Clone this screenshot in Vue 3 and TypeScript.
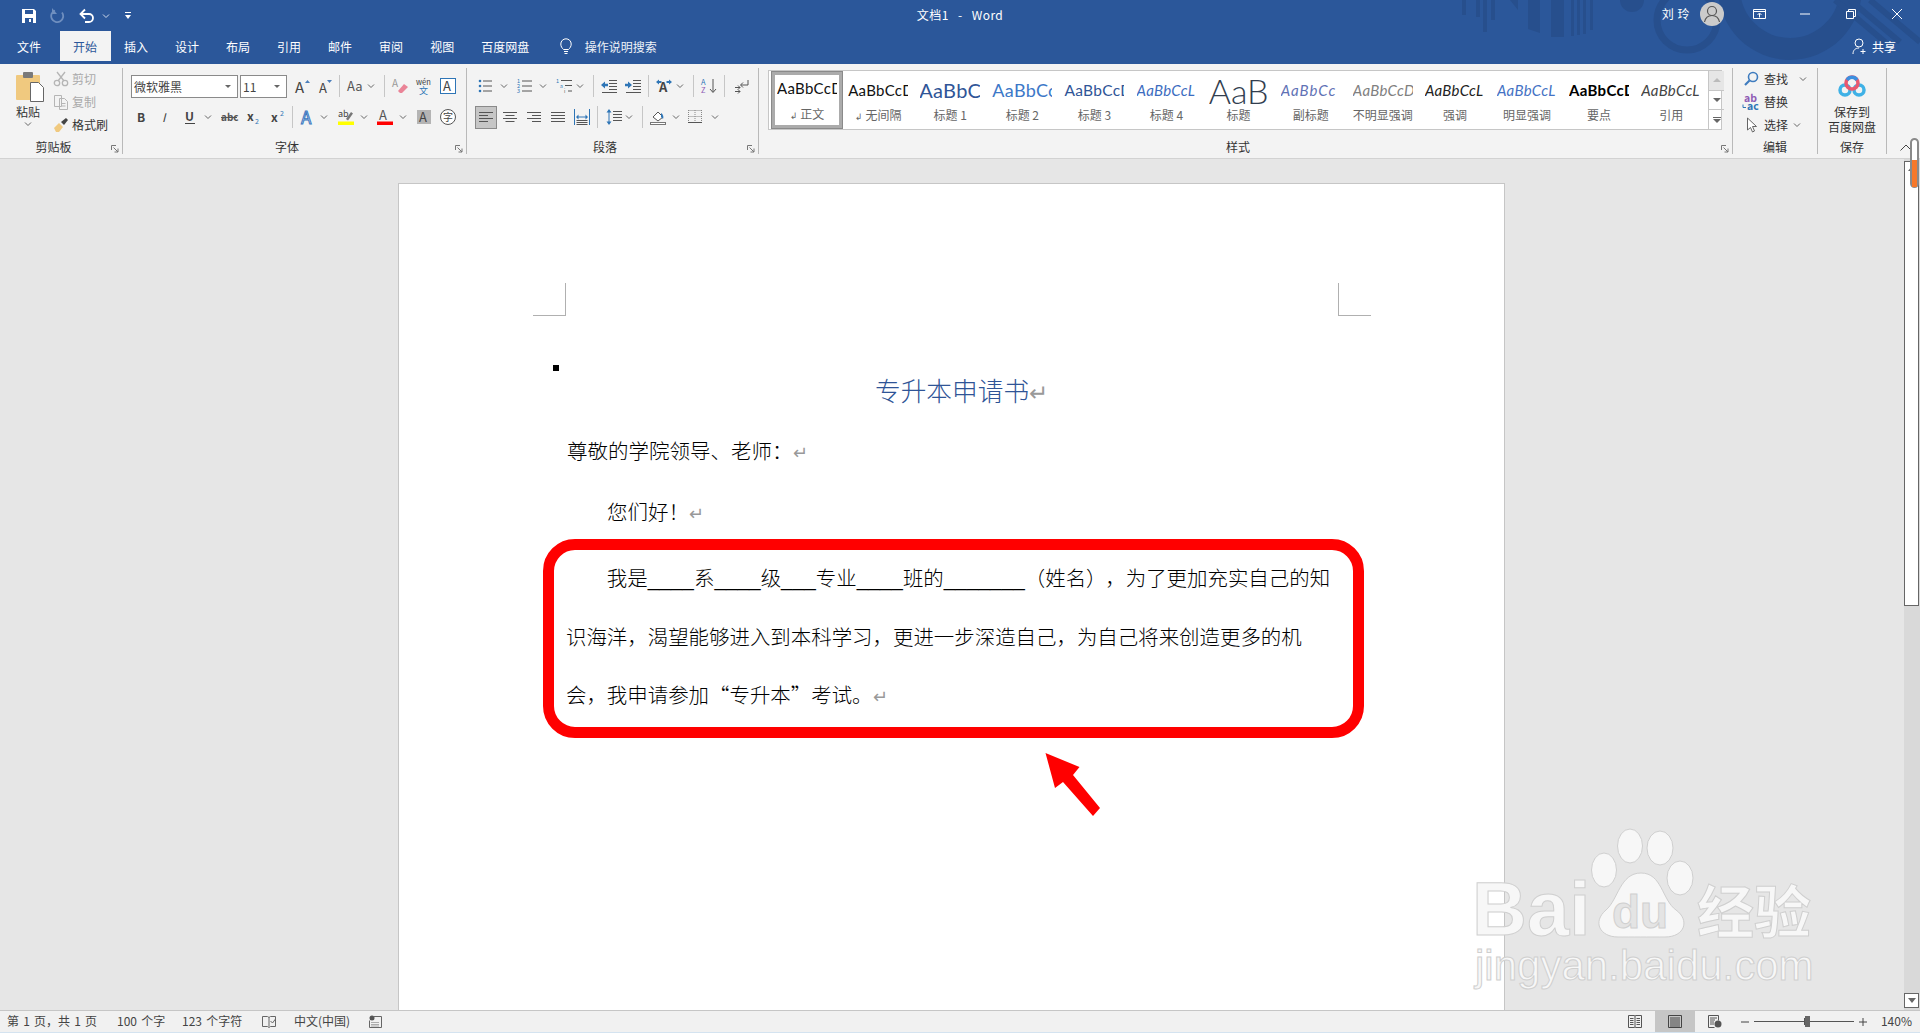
<script setup lang="ts">
interface Cell {
  size: number;
  ml: number;
  svg?: string;
  sep?: boolean;
  active?: boolean;
}

// [icon name, centre x on the ribbon, active]
type Spec = [string, number, boolean?];

const GREY = '#555';
const BLUE = '#2e75b6';
const CHEV = '<path d="M1 2.5l3 3 3-3" fill="none" stroke="#666" stroke-width="1"/>';

const txt = (x: number, y: number, size: number, s: string, attrs = 'fill="#444"') =>
  `<text x="${x}" y="${y}" font-size="${size}" ${attrs}>${s}</text>`;

const lines = (d: string, color = GREY) => `<path d="${d}" fill="none" stroke="${color}" stroke-width="1"/>`;

const icons: Record<string, string> = {
  grow: txt(1, 15, 15, 'A', 'fill="#444"') + `<path d="M11 5l2.5-3L16 5z" fill="#4a7ebb"/>`,
  shrink: txt(2, 15, 13, 'A', 'fill="#444"') + `<path d="M10 2h5l-2.5 3z" fill="#4a7ebb"/>`,
  case: txt(1, 13, 13, 'Aa', 'fill="#555"'),
  eraser: txt(0, 9, 10, 'A', 'fill="#999"') + `<path d="M6 13l6-7 4 3-6 6H8z" fill="#ea8497"/>`,
  wen: txt(0, 7, 7.5, 'wén', 'fill="#333"') + txt(3, 16, 9, '文', `fill="${BLUE}"`),
  boxA: `<rect x=".5" y=".5" width="15" height="15" fill="#fff" stroke="${BLUE}"/>` + txt(3, 13, 13, 'A', 'fill="#444"'),
  bold: txt(4, 13, 12, 'B', 'fill="#444" font-weight="bold"'),
  italic: txt(5, 13, 12, 'I', 'fill="#444" font-style="italic"'),
  under: txt(3, 12, 12, 'U', 'fill="#444" font-weight="bold"') + lines('M3 14.5h10', '#444'),
  strike: txt(0, 12, 10, 'abc', 'fill="#555" font-weight="bold"') + lines('M0 8.5h16', '#555'),
  sub: txt(1, 12, 12, 'x', 'fill="#444" font-weight="bold"') + txt(9, 15, 7, '2', `fill="${BLUE}"`),
  sup: txt(1, 13, 12, 'x', 'fill="#444" font-weight="bold"') + txt(10, 7, 7, '2', `fill="${BLUE}"`),
  fxA: txt(1, 15, 17, 'A', `fill="#fff" stroke="#3b78c0" stroke-width="1"`),
  hl: txt(0, 8, 9, 'ab', 'fill="#444"') + `<path d="M8 10l5-7 2 1.5-5 7z" fill="#777"/><rect y="12.5" width="16" height="3.5" fill="#ff0"/>`,
  colorA: txt(2, 11, 13, 'A', 'fill="#555"') + `<rect y="12.5" width="16" height="3.5" fill="#f00"/>`,
  bgA: `<rect x="1" y="1" width="14" height="14" fill="#b4b4b4"/>` + txt(3, 13, 13, 'A', 'fill="#444"'),
  circ: `<circle cx="8" cy="8" r="7.5" fill="#fff" stroke="#555"/>` + txt(3, 12, 10, '字', 'fill="#444"'),
  bullets: `<circle cx="2" cy="3" r="1.3" fill="${BLUE}"/><circle cx="2" cy="8" r="1.3" fill="${BLUE}"/><circle cx="2" cy="13" r="1.3" fill="${BLUE}"/>` + lines('M5 3h9M5 8h9M5 13h9'),
  nums: txt(0, 5, 5.5, '1', `fill="${BLUE}"`) + txt(0, 10, 5.5, '2', `fill="${BLUE}"`) + txt(0, 15, 5.5, '3', `fill="${BLUE}"`) + lines('M5 3h10M5 8h10M5 13h10'),
  multi: txt(0, 5, 5.5, '1', `fill="${BLUE}"`) + txt(4, 10, 5, 'a', `fill="${BLUE}"`) + txt(8, 15, 5, 'i', 'fill="#555"') + lines('M5 2.5h11M9 7.5h7M12 13h4'),
  outdent: lines('M8 2.5h8M8 5.5h8M8 8.5h8M8 11.5h8M1 14.5h15') + `<path d="M0 7l4-3.5v2.2h3v2.6H4v2.2z" fill="${BLUE}"/>`,
  indent: lines('M8 2.5h8M8 5.5h8M8 8.5h8M8 11.5h8M1 14.5h15') + `<path d="M7 7L3 3.5v2.2H0v2.6h3v2.2z" fill="${BLUE}"/>`,
  xA: txt(3, 14, 13, 'A', 'fill="#444" font-weight="bold"') + `<path d="M0 4l3-2.5V3h2.5v2H3v1.5zM16 4l-3-2.5V3h-2.5v2H13v1.5z" fill="${BLUE}"/>`,
  sort: txt(0, 7, 7.5, 'A', `fill="${BLUE}"`) + txt(0, 15, 7.5, 'Z', 'fill="#8e5bb5"') + lines('M12 1v13M9 11l3 3.5 3-3.5'),
  para: lines('M15 2v5H8M10 4.5L7.5 7l2.5 2.5M2 9.5h5M5 7.5l2 2-2 2M2 13.5h5M5 11.5l2 2-2 2'),
  alignL: lines('M1 3.5h14M1 6.5h9M1 9.5h14M1 12.5h9'),
  alignC: lines('M1 3.5h14M3.5 6.5h9M1 9.5h14M3.5 12.5h9'),
  alignR: lines('M1 3.5h14M6 6.5h9M1 9.5h14M6 12.5h9'),
  just: lines('M1 3.5h14M1 6.5h14M1 9.5h14M1 12.5h14'),
  dist: lines('M.5 0v16M15.5 0v16', BLUE) + lines('M3 8h10', BLUE) + lines('M2.5 11.5h11M2.5 13.5h11M2.5 15.5h11') + `<path d="M2 8l2.5-2.5v5zM14 8l-2.5-2.5v5z" fill="${BLUE}"/>`,
  spacing: lines('M7 2.5h9M7 5.5h9M7 8.5h9M7 11.5h9') + lines('M3 1.5v13', BLUE) + `<path d="M3 0L.5 3.5h5zM3 16L.5 12.5h5z" fill="${BLUE}"/>`,
  shade: `<path d="M3 8l5-5 5 5-5 4z" fill="#fff" stroke="#555"/><path d="M11 4c2 1 3 4 2 6l-2-2z" fill="${BLUE}"/><rect x=".5" y="13.5" width="15" height="2" fill="#fff" stroke="#777"/>`,
  borders: `<path d="M.5 1.5h13M.5 7.5h13M7 1v12M.5 1v12M13.5 1v12" fill="none" stroke="#888" stroke-width="1" stroke-dasharray="1 1"/>` + lines('M0 13.5h14'),
};

function layout(start: number, specs: Spec[]): Cell[] {
  let end = start;
  return specs.map(([name, c, active]) => {
    const isChev = name === 'chev';
    const isSep = name === 'sep';
    const size = isSep ? 1 : isChev ? 8 : active ? 22 : 16;
    const left = c - size / 2;
    const cell: Cell = {
      size,
      ml: left - end,
      svg: isSep ? undefined : isChev ? CHEV : icons[name],
      sep: isSep,
      active,
    };
    end = left + size;
    return cell;
  });
}

const fontRow1 = layout(287, [
  ['grow', 301.5], ['shrink', 325], ['sep', 339], ['case', 353.5], ['chev', 371], ['sep', 384],
  ['eraser', 400], ['wen', 424], ['boxA', 448],
]);
const fontRow2 = layout(131, [
  ['bold', 141], ['italic', 165], ['under', 189.5], ['chev', 208], ['strike', 229], ['sub', 253.5],
  ['sup', 277.5], ['sep', 292], ['fxA', 308], ['chev', 324], ['hl', 346], ['chev', 364],
  ['colorA', 385], ['chev', 403], ['bgA', 424], ['circ', 448],
]);
const paraRow1 = layout(475, [
  ['bullets', 486], ['chev', 504], ['nums', 525], ['chev', 543], ['multi', 564], ['chev', 580],
  ['sep', 593], ['outdent', 609], ['indent', 633], ['sep', 648], ['xA', 664], ['chev', 680],
  ['sep', 693], ['sort', 709], ['sep', 724], ['para', 741],
]);
const paraRow2 = layout(475, [
  ['alignL', 486, true], ['alignC', 510], ['alignR', 534], ['just', 558], ['dist', 582], ['sep', 597],
  ['spacing', 614], ['chev', 629], ['sep', 642], ['shade', 658], ['chev', 676], ['borders', 696], ['chev', 715],
]);

const tabs = ['文件', '开始', '插入', '设计', '布局', '引用', '邮件', '审阅', '视图', '百度网盘'];

const styleItems = [
  { sample: 'AaBbCcD', label: '正文', cls: 's-normal', mark: true, selected: true },
  { sample: 'AaBbCcD', label: '无间隔', cls: 's-normal', mark: true },
  { sample: 'AaBbC', label: '标题 1', cls: 's-h1' },
  { sample: 'AaBbCc', label: '标题 2', cls: 's-h2' },
  { sample: 'AaBbCcD', label: '标题 3', cls: 's-h3' },
  { sample: 'AaBbCcL', label: '标题 4', cls: 's-h4' },
  { sample: 'AaB', label: '标题', cls: 's-title' },
  { sample: 'AaBbCc', label: '副标题', cls: 's-sub' },
  { sample: 'AaBbCcD', label: '不明显强调', cls: 's-faint' },
  { sample: 'AaBbCcL', label: '强调', cls: 's-em' },
  { sample: 'AaBbCcL', label: '明显强调', cls: 's-strong-em' },
  { sample: 'AaBbCcD', label: '要点', cls: 's-bold' },
  { sample: 'AaBbCcL', label: '引用', cls: 's-quote' },
];
</script>

<template>
  <div class="word">
    <header class="titlebar">
      <svg class="pattern" width="470" height="64" viewBox="1450 0 470 64">
        <g fill="#274f8d">
          <path d="M1462 0h4v15h-4zM1476 0h4v17h-4zM1483 0h4v32h-4zM1491 0h4v20h-4zM1510 0h8v10zM1528 0h12v33l-12-4zM1551 0h13v37h-13zM1571 0h3v36h-3zM1577 0h3v35h-3zM1583 0h3v34h-3zM1590 0h3v30h-3z" />
          <circle cx="1632" cy="0" r="12" />
          <circle cx="1790" cy="-12" r="72" />
        </g>
        <circle cx="1687" cy="20" r="30" fill="none" stroke="#274f8d" stroke-width="7" />
        <circle cx="1790" cy="-12" r="50" fill="#2b579a" />
        <path d="M1835 0l50 42M1850 0l50 42M1870 0l50 42" stroke="#274f8d" stroke-width="6" />
      </svg>

      <div class="title-row">
        <div class="qat">
          <svg width="16" height="16" viewBox="0 0 16 16">
            <path d="M1 1h12l2 2v12H1z" fill="#fff" />
            <path d="M4 2h8v4H4zM4 10h8v5H4z" fill="#2b579a" />
            <path d="M8 11h2v3H8z" fill="#fff" />
          </svg>
          <svg class="redo" width="16" height="16" viewBox="0 0 16 16">
            <path d="M5 2.5a6 6 0 1 0 7 2" fill="none" stroke="#6f8fbf" stroke-width="1.8" />
            <path d="M2 0v6h5z" fill="#6f8fbf" />
          </svg>
          <svg class="undo" width="16" height="16" viewBox="0 0 16 16">
            <path d="M2 6h8a4 4 0 0 1 0 8H6" fill="none" stroke="#fff" stroke-width="1.8" />
            <path d="M6 1.5L1.5 6 6 10.5" fill="none" stroke="#fff" stroke-width="1.8" />
          </svg>
          <svg class="undo-chev" width="8" height="8" viewBox="0 0 8 8">
            <path d="M1 2.5l3 3 3-3" fill="none" stroke="#cfdaeb" />
          </svg>
          <svg class="custom" width="8" height="10" viewBox="0 0 8 10">
            <path d="M1 1.5h6" stroke="#fff" />
            <path d="M1 4h6L4 8z" fill="#fff" />
          </svg>
        </div>
        <div class="doc-name">文档1 &nbsp;&nbsp;-&nbsp;&nbsp; Word</div>
        <div class="win">
          <span class="user">刘 玲</span>
          <svg class="avatar" width="24" height="24" viewBox="0 0 24 24">
            <circle cx="12" cy="12" r="12" fill="#cbcbcb" />
            <circle cx="12" cy="9" r="4.5" fill="none" stroke="#555" stroke-width="1.2" />
            <path d="M4.5 20c1-5 4-6.500 7.500-6.500s6.500 1.500 7.500 6.500" fill="none" stroke="#555" stroke-width="1.2" />
          </svg>
          <svg class="display" width="13" height="10" viewBox="0 0 13 10">
            <path d="M.5.5h12v9H.5z" fill="none" stroke="#fff" />
            <path d="M1 2.500h11" stroke="#fff" />
            <path d="M6.500 8.500v-4M4.500 6l2-2 2 2" fill="none" stroke="#fff" />
          </svg>
          <svg class="w-min" width="10" height="10" viewBox="0 0 10 10"><path d="M0 5h10" stroke="#fff" /></svg>
          <svg class="w-max" width="10" height="10" viewBox="0 0 10 10">
            <path d="M.5 2.500h7v7h-7zM2.500 2.500v-2h7v7h-2" fill="none" stroke="#fff" />
          </svg>
          <svg class="w-close" width="10" height="10" viewBox="0 0 10 10">
            <path d="M0 0l10 10M10 0L0 10" stroke="#fff" />
          </svg>
        </div>
      </div>

      <nav class="tabs">
        <span v-for="tab in tabs" :key="tab" class="tab" :class="{ active: tab === '开始' }">{{ tab }}</span>
        <svg class="bulb" width="12" height="17" viewBox="0 0 12 17">
          <path d="M3.500 11.500C2 10 .8 8.500.8 6a5.200 5.200 0 0 1 10.400 0c0 2.500-1.200 4-2.700 5.500z" fill="none" stroke="#fff" />
          <path d="M4 13.500h4M4.500 15.500h3" stroke="#fff" />
        </svg>
        <span class="search">操作说明搜索</span>
        <span class="share">
          <svg width="16" height="17" viewBox="0 0 16 17">
            <circle cx="7" cy="5" r="4" fill="none" stroke="#fff" />
            <path d="M1 16c0-4 2.500-6 6-6M11 11v5M8.500 13.500h5" fill="none" stroke="#fff" />
          </svg>
          共享
        </span>
      </nav>
    </header>

    <section class="ribbon">
      <!-- 剪贴板 -->
      <div class="group g-clip">
        <div class="clip-body">
          <div class="paste">
            <svg width="28" height="30" viewBox="0 0 28 30">
              <rect x="0" y="3" width="24" height="25" rx="1" fill="#f0c97f" />
              <rect x="7" y="0" width="10" height="6" rx="1" fill="#7a7a7a" />
              <path d="M14.500 10.500h8l5 5v14h-13z" fill="#fff" stroke="#666" />
            </svg>
            <span class="paste-text">粘贴</span>
            <svg width="8" height="8" viewBox="0 0 8 8" v-html="CHEV" />
          </div>
          <div class="clip-list">
            <div class="clip-row off">
              <svg width="16" height="16" viewBox="0 0 16 16">
                <path d="M4 1l7 9M12 1L5 10" stroke="#b5b5b5" stroke-width="1.300" />
                <circle cx="4" cy="12" r="2.700" fill="none" stroke="#b5b5b5" stroke-width="1.300" />
                <circle cx="12" cy="12" r="2.700" fill="none" stroke="#b5b5b5" stroke-width="1.300" />
              </svg>
              剪切
            </div>
            <div class="clip-row off">
              <svg width="16" height="16" viewBox="0 0 16 16">
                <path d="M1.500 1.500h7v11h-7zM6.500 4.500h5l3 3v8h-8z" fill="#f3f3f3" stroke="#b5b5b5" />
                <path d="M8.500 9.500h4M8.500 12h4" stroke="#b5b5b5" />
              </svg>
              复制
            </div>
            <div class="clip-row">
              <svg width="16" height="16" viewBox="0 0 16 16">
                <path d="M1 11l5-5 4 4-4 5H3z" fill="#f0c97f" />
                <path d="M8 5l5-4 2 2-4 5z" fill="#444" />
              </svg>
              格式刷
            </div>
          </div>
        </div>
        <div class="group-label with-launcher">剪贴板</div>
        <svg class="launcher" width="8" height="8" viewBox="0 0 8 8">
          <path d="M.5 5V.5H5M2.500 2.500L7 7M7 3.500V7H3.500" fill="none" stroke="#777" />
        </svg>
      </div>

      <!-- 字体 -->
      <div class="group g-font">
        <div class="tool-rows">
          <div class="row">
            <span class="combo font-combo">微软雅黑<i class="caret" /></span>
            <span class="combo size-combo">11<i class="caret" /></span>
            <template v-for="(cell, i) in fontRow1" :key="i">
              <span v-if="cell.sep" class="sep" :style="{ marginLeft: cell.ml + 'px' }" />
              <svg v-else :style="{ marginLeft: cell.ml + 'px' }" :width="cell.size" :height="cell.size" :viewBox="`0 0 ${cell.size} ${cell.size}`" v-html="cell.svg" />
            </template>
          </div>
          <div class="row">
            <template v-for="(cell, i) in fontRow2" :key="i">
              <span v-if="cell.sep" class="sep" :style="{ marginLeft: cell.ml + 'px' }" />
              <svg v-else :style="{ marginLeft: cell.ml + 'px' }" :width="cell.size" :height="cell.size" :viewBox="`0 0 ${cell.size} ${cell.size}`" v-html="cell.svg" />
            </template>
          </div>
        </div>
        <div class="group-label with-launcher">字体</div>
        <svg class="launcher" width="8" height="8" viewBox="0 0 8 8">
          <path d="M.5 5V.5H5M2.500 2.500L7 7M7 3.500V7H3.500" fill="none" stroke="#777" />
        </svg>
      </div>

      <!-- 段落 -->
      <div class="group g-para">
        <div class="tool-rows">
          <div class="row">
            <template v-for="(cell, i) in paraRow1" :key="i">
              <span v-if="cell.sep" class="sep" :style="{ marginLeft: cell.ml + 'px' }" />
              <svg v-else :style="{ marginLeft: cell.ml + 'px' }" :width="cell.size" :height="cell.size" :viewBox="`0 0 ${cell.size} ${cell.size}`" v-html="cell.svg" />
            </template>
          </div>
          <div class="row">
            <template v-for="(cell, i) in paraRow2" :key="i">
              <span v-if="cell.sep" class="sep" :style="{ marginLeft: cell.ml + 'px' }" />
              <span v-else-if="cell.active" class="active-tool">
                <svg width="16" height="16" viewBox="0 0 16 16" v-html="cell.svg" />
              </span>
              <svg v-else :style="{ marginLeft: cell.ml + 'px' }" :width="cell.size" :height="cell.size" :viewBox="`0 0 ${cell.size} ${cell.size}`" v-html="cell.svg" />
            </template>
          </div>
        </div>
        <div class="group-label with-launcher">段落</div>
        <svg class="launcher" width="8" height="8" viewBox="0 0 8 8">
          <path d="M.5 5V.5H5M2.500 2.500L7 7M7 3.500V7H3.500" fill="none" stroke="#777" />
        </svg>
      </div>

      <!-- 样式 -->
      <div class="group g-style">
        <div class="gallery">
          <div v-for="item in styleItems" :key="item.label" class="style-item" :class="{ selected: item.selected }">
            <div class="sample" :class="item.cls">{{ item.sample }}</div>
            <div class="style-name"><span v-if="item.mark" class="mark">↲</span>{{ item.label }}</div>
          </div>
          <div class="gallery-btns">
            <span class="g-btn g-off"><i class="tri-up" /></span>
            <span class="g-btn"><i class="tri-down" /></span>
            <span class="g-btn"><i class="tri-more" /><i class="tri-down" /></span>
          </div>
        </div>
        <div class="group-label with-launcher">样式</div>
        <svg class="launcher" width="8" height="8" viewBox="0 0 8 8">
          <path d="M.5 5V.5H5M2.500 2.500L7 7M7 3.500V7H3.500" fill="none" stroke="#777" />
        </svg>
      </div>

      <!-- 编辑 -->
      <div class="group g-edit">
        <div class="edit-list">
          <div class="edit-row">
            <svg width="16" height="16" viewBox="0 0 16 16">
              <circle cx="10" cy="6" r="4.500" fill="none" stroke="#3f7cbf" stroke-width="1.600" />
              <path d="M6.500 9.500L2 14" stroke="#3f7cbf" stroke-width="2.200" />
            </svg>
            <span>查找</span>
            <svg class="e-chev" width="8" height="8" viewBox="0 0 8 8" v-html="CHEV" />
          </div>
          <div class="edit-row">
            <svg class="replace" width="16" height="16" viewBox="0 0 16 16">
              <text x="1" y="8" font-size="10.500" fill="#8e5bb5" font-weight="bold">ab</text>
              <text x="4" y="16" font-size="10.500" fill="#2e75b6" font-weight="bold">ac</text>
              <path d="M0 10.500v3h3" fill="none" stroke="#2e75b6" />
            </svg>
            <span>替换</span>
          </div>
          <div class="edit-row">
            <svg width="16" height="16" viewBox="0 0 16 16">
              <path d="M4.500 1v12l3-2.500 2 4.500 2-1-2-4.500h4z" fill="#fff" stroke="#666" />
            </svg>
            <span>选择</span>
            <svg class="s-chev" width="8" height="8" viewBox="0 0 8 8" v-html="CHEV" />
          </div>
        </div>
        <div class="group-label">编辑</div>
      </div>

      <!-- 保存 -->
      <div class="group g-save">
        <div class="save-body">
          <svg width="28" height="22" viewBox="0 0 28 22">
            <circle cx="7" cy="15" r="5" fill="none" stroke="#3fb1e6" stroke-width="3.500" />
            <circle cx="21" cy="15" r="5" fill="none" stroke="#3fb1e6" stroke-width="3.500" />
            <circle cx="14" cy="8" r="6" fill="none" stroke="#e9586f" stroke-width="3.500" />
            <path d="M9 5a6 6 0 0 1 10 0" fill="none" stroke="#3c8fe0" stroke-width="3.500" />
          </svg>
          <div class="save-text">保存到<br />百度网盘</div>
        </div>
        <div class="group-label">保存</div>
      </div>

      <div class="collapse">
        <svg width="12" height="7" viewBox="0 0 12 7">
          <path d="M.5 6.500L6 1l5.500 5.500" fill="none" stroke="#444" />
        </svg>
      </div>
    </section>

    <main class="workspace">
      <div class="canvas">
        <article class="page">
          <div class="crops">
            <span class="crop crop-left" />
            <span class="crop crop-right" />
          </div>
          <div class="doc">
            <i class="anchor" />
            <h1 class="doc-title">专升本申请书<span class="ret ret-big">↵</span></h1>
            <p class="greet">尊敬的学院领导、老师：<span class="ret">↵</span></p>
            <p class="hello">您们好！<span class="ret">↵</span></p>
            <div class="para">
              <div class="first">我是<span class="u">____</span>系<span class="u">____</span>级<span class="u">___</span>专业<span class="u">____</span>班的<span class="u">_______</span>（姓名）<span class="wide">，</span>为了更加充实自己的知</div>
              <div>识海洋，渴望能够进入到本科学习，更进一步深造自己，为自己将来创造更多的机</div>
              <div>会，我申请参加“专升本”考试。<span class="ret">↵</span></div>
            </div>
          </div>
          <!-- red annotation over the paragraph -->
          <div class="callout" />
          <svg class="arrow" width="70" height="70" viewBox="0 0 70 70">
            <path d="M5.500 3L39.500 17L33 25L60 58L53 66L23 32L15 38Z" fill="#f00" />
          </svg>
        </article>
      </div>
      <aside class="scrollbar">
        <div class="thumb"><i class="sb-up" /></div>
        <div class="sb-down"><i class="sb-down-tri" /></div>
      </aside>
      <div class="marker"><i /></div>
    </main>

    <footer class="statusbar">
      <span class="st st-page">第 1 页，共 1 页</span>
      <span class="st st-words">100 个字</span>
      <span class="st st-chars">123 个字符</span>
      <svg class="st-proof" width="14" height="13" viewBox="0 0 14 13">
        <path d="M.5 1.500h5l1.500 1 1.500-1h5v10h-5l-1.500 1-1.500-1h-5zM7 2.500v9" fill="none" stroke="#666" />
        <path d="M8.500 6l2 2 3-4" fill="none" stroke="#666" />
      </svg>
      <span class="st st-lang">中文(中国)</span>
      <svg class="st-macro" width="13" height="13" viewBox="0 0 13 13">
        <circle cx="3" cy="3" r="2.500" fill="#555" />
        <path d="M5 1.500h7.500v11H.5V5.500" fill="none" stroke="#666" />
        <path d="M2.500 7.500h8M2.500 9.500h8M2.500 11h8" stroke="#666" stroke-dasharray="1 1" />
      </svg>

      <div class="st-right">
        <svg width="14" height="13" viewBox="0 0 14 13">
          <path d="M.5.5h6l.5 1 .5-1h6v12h-6l-.5-1-.5 1h-6zM7 1.500v10M2 3.500h3.500M2 5.500h3.500M2 7.500h3.500M2 9.500h3.500M8.500 3.500H12M8.500 5.500H12M8.500 7.500H12M8.500 9.500H12" fill="none" stroke="#555" />
        </svg>
        <span class="view-active">
          <svg width="14" height="13" viewBox="0 0 14 13">
            <path d="M.5.5h13v12H.5zM2 3h10M2 5h10M2 7h10M2 9h10M2 11h10" fill="none" stroke="#444" />
          </svg>
        </span>
        <svg width="14" height="13" viewBox="0 0 14 13">
          <path d="M.5.5h10v5M.5.500v12h6M2 3h7M2 5h5M2 7h4M2 9h4" fill="none" stroke="#555" />
          <circle cx="10" cy="9" r="3.500" fill="#555" />
        </svg>
        <svg class="z-minus" width="8" height="8" viewBox="0 0 8 8"><path d="M0 4h8" stroke="#444" /></svg>
        <div class="slider"><i class="tick" /><i class="knob" /></div>
        <svg class="z-plus" width="8" height="8" viewBox="0 0 8 8"><path d="M0 4h8M4 0v8" stroke="#444" /></svg>
        <span class="st st-zoom">140%</span>
      </div>
    </footer>

    <!-- site watermark stamped across the whole screenshot -->
    <svg class="watermark" width="350" height="180" viewBox="0 0 350 180">
      <g fill="#f7f7f7" stroke="#cfcfcf" stroke-width="1">
        <ellipse cx="160" cy="26" rx="12.500" ry="17" />
        <ellipse cx="190" cy="28" rx="13" ry="17" />
        <ellipse cx="134" cy="50" rx="12.500" ry="17" />
        <ellipse cx="210" cy="58" rx="13" ry="17" />
        <path d="M171 53C150 53 148 80 136 90C122 102 130 117 148 117C160 117 180 117 195 117C215 117 220 100 206 90C192 80 192 53 171 53Z" />
        <text x="2" y="115" font-size="76" font-weight="bold">Bai</text>
        <text x="227" y="113" font-size="57" font-weight="bold" font-family="Noto Sans CJK SC, sans-serif">经验</text>
        <text x="5" y="160" font-size="42">jingyan.baidu.com</text>
      </g>
      <text x="142" y="108" font-size="46" font-weight="bold" fill="#e4e4e4" stroke="#d0d0d0" stroke-width="1">du</text>
    </svg>
  </div>
</template>

<style>
html,
body {
  margin: 0;
  overflow: hidden;
}
</style>

<style scoped>
.word {
  position: relative;
  display: flex;
  flex-direction: column;
  width: 100%;
  height: 100vh;
  overflow: hidden;
  font-family: "Noto Sans CJK SC", "Liberation Sans", sans-serif;
  font-size: 12px;
  color: #444;
  background: #e6e6e6;
}

/* title bar */
.titlebar {
  position: relative;
  flex: none;
  height: 64px;
  background: #2b579a;
  color: #fff;
}
.pattern {
  position: absolute;
  top: 0;
  right: 0;
}
.title-row {
  position: relative;
  display: grid;
  grid-template-columns: 1fr auto 1fr;
  align-items: center;
  height: 34px;
  margin-top: -3px;
  padding-top: 3px;
  box-sizing: border-box;
}
.qat {
  display: flex;
  align-items: center;
  padding-left: 21px;
}
.redo {
  margin-left: 13px;
}
.undo {
  margin-left: 13px;
}
.undo-chev {
  margin-left: 7px;
}
.custom {
  margin-left: 14px;
}
.doc-name {
  line-height: 16px;
  margin-top: -2px;
  letter-spacing: .4px;
}
.win {
  display: flex;
  align-items: center;
  justify-content: flex-end;
  margin-top: -4px;
}
.user {
  letter-spacing: .5px;
}
.avatar {
  margin-left: 10px;
}
.display {
  margin-left: 29px;
}
.w-min {
  margin-left: 34px;
}
.w-max {
  margin-left: 36px;
}
.w-close {
  margin: 0 18px 0 36px;
}
.tabs {
  position: relative;
  display: flex;
  align-items: stretch;
  height: 30px;
  padding-left: 3.500px;
}
.tab {
  display: flex;
  align-items: center;
  padding: 0 13.500px;
}
.tab:first-child {
  margin-right: 5px;
}
.tab.active {
  background: #f3f3f3;
  color: #2b579a;
}
.bulb {
  align-self: center;
  margin-left: 17px;
}
.search {
  align-self: center;
  margin-left: 13px;
  color: #eef2f8;
}
.share {
  display: flex;
  align-items: center;
  gap: 4px;
  margin-left: auto;
  padding-right: 24px;
}

/* ribbon */
.ribbon {
  display: flex;
  flex: none;
  height: 95px;
  box-sizing: border-box;
  padding-top: 4px;
  background: #f3f3f3;
  border-bottom: 1px solid #d2d2d2;
}
.group {
  position: relative;
  display: flex;
  flex-direction: column;
  flex: none;
  box-sizing: border-box;
  height: 86px;
  border-right: 1px solid #b9b9b9;
}
.g-clip {
  width: 123px;
}
.g-font {
  width: 344px;
}
.g-para {
  width: 292px;
}
.g-style {
  width: 974px;
}
.g-edit {
  width: 85px;
}
.g-save {
  width: 69px;
}
.group-label {
  margin-top: auto;
  height: 15px;
  line-height: 15px;
  text-align: center;
  color: #333;
  white-space: nowrap;
}
.with-launcher {
  padding-right: 15px;
}
.launcher {
  position: absolute;
  right: 3px;
  bottom: 1px;
}

.clip-body {
  display: flex;
}
.paste {
  display: flex;
  flex-direction: column;
  align-items: center;
  flex: none;
  padding-left: 3px;
  padding-top: 4px;
  width: 50px;
}
.paste svg:first-child {
  margin-left: 4px;
}
.paste-text {
  line-height: 16px;
  margin-top: 2px;
  color: #333;
}
.clip-list {
  display: flex;
  flex-direction: column;
  margin-top: -1px;
}
.clip-row {
  display: flex;
  align-items: center;
  gap: 3px;
  height: 23px;
  color: #333;
}
.clip-row.off {
  color: #aaa;
}

.tool-rows {
  display: flex;
  flex-direction: column;
  gap: 7px;
  padding-top: 6px;
}
.row {
  display: flex;
  align-items: center;
  height: 24px;
  white-space: nowrap;
}
.g-font .row {
  padding-left: 8px;
}
.g-para .row {
  padding-left: 8px;
}
.row svg {
  flex: none;
  overflow: visible;
}
.sep {
  flex: none;
  width: 1px;
  height: 22px;
  background: #c6c6c6;
}
.active-tool {
  display: flex;
  align-items: center;
  justify-content: center;
  flex: none;
  box-sizing: border-box;
  width: 22px;
  height: 23px;
  background: #c6c6c6;
  border: 1px solid #8a8a8a;
}
.combo {
  position: relative;
  display: flex;
  align-items: center;
  box-sizing: border-box;
  height: 23px;
  padding-left: 2px;
  background: #fff;
  border: 1px solid #8a8a8a;
  color: #444;
}
.font-combo {
  width: 107px;
}
.size-combo {
  width: 47px;
  margin-left: 2px;
}
.caret {
  position: absolute;
  right: 6px;
  top: 9px;
  border-style: solid;
  border-width: 3px 3px 0;
  border-color: #666 transparent transparent;
}

/* style gallery */
.gallery {
  display: flex;
  box-sizing: border-box;
  height: 60px;
  margin: 2px 0 0 9px;
  width: 954px;
  padding-left: 2px;
  background: #fff;
  border: 1px solid #c6c6c6;
}
.style-item {
  flex: none;
  box-sizing: border-box;
  width: 72.100px;
  height: 58px;
  text-align: center;
  overflow: hidden;
}
.style-item:not(.selected) {
  padding-right: 2px;
}
.style-item.selected {
  border: 4px solid #ababab;
  outline: 1px solid #8a8a8a;
  outline-offset: -1px;
}
.style-item.selected .sample {
  height: 34px;
  margin-top: -4px;
}
.sample {
  display: flex;
  align-items: center;
  justify-content: flex-start;
  height: 38px;
  width: 60px;
  margin: 0 auto;
  overflow: hidden;
  white-space: nowrap;
  font-family: "Lato", "Liberation Sans", sans-serif;
  font-size: 15px;
  letter-spacing: .3px;
  color: #111;
}
.selected .sample {
  margin-top: 0;
}
.s-h1 {
  justify-content: center;
  font-size: 20px;
  color: #2f5597;
}
.s-h2 {
  font-size: 18px;
  color: #3c78c8;
}
.s-h3 {
  font-size: 15.500px;
  color: #2f5597;
}
.s-h4 {
  font-size: 15px;
  font-style: italic;
  color: #3c6cc0;
}
.s-title {
  justify-content: center;
  font-size: 34px;
  font-weight: 300;
  letter-spacing: 0;
  color: #323e4f;
}
.s-sub {
  font-size: 15px;
  font-style: italic;
  letter-spacing: 1px;
  color: #5f72b5;
}
.s-faint {
  font-style: italic;
  color: #808080;
}
.s-em {
  font-style: italic;
  color: #222;
}
.s-strong-em {
  font-style: italic;
  color: #4472c4;
}
.s-bold {
  font-weight: bold;
  color: #000;
}
.s-quote {
  font-style: italic;
  color: #444;
}
.style-name {
  margin-top: -1px;
  line-height: 14px;
  color: #666;
  white-space: nowrap;
}
.selected .style-name {
  margin-top: 2px;
}
.mark {
  margin-right: 3px;
  font-family: "DejaVu Sans", sans-serif;
  font-size: 9px;
}
.gallery-btns {
  display: flex;
  flex-direction: column;
  flex: none;
  width: 15px;
  margin-left: 0;
  border-left: 1px solid #c6c6c6;
}
.g-btn {
  display: flex;
  flex-direction: column;
  align-items: center;
  justify-content: center;
  gap: 1px;
  flex: 1;
  border-bottom: 1px solid #c6c6c6;
}
.g-btn:last-child {
  border-bottom: 0;
}
.g-off {
  background: #e6e6e6;
}
.tri-up {
  border-style: solid;
  border-width: 0 4px 4px;
  border-color: transparent transparent #bbb;
}
.tri-down {
  border-style: solid;
  border-width: 4px 4px 0;
  border-color: #666 transparent transparent;
}
.tri-more {
  width: 8px;
  height: 1px;
  background: #666;
}

/* editing + save */
.edit-list {
  display: flex;
  flex-direction: column;
  margin-top: -1px;
  padding-left: 10px;
}
.edit-row {
  display: flex;
  align-items: center;
  height: 23px;
  gap: 5px;
  color: #333;
}
.replace {
  overflow: visible;
}
.e-chev {
  margin-left: 6px;
}
.s-chev {
  margin-left: 0;
}
.save-body {
  display: flex;
  flex-direction: column;
  align-items: center;
  padding-top: 7px;
}
.save-text {
  margin-top: 8px;
  line-height: 14.500px;
  text-align: center;
  color: #333;
  white-space: nowrap;
}
.collapse {
  display: flex;
  align-items: flex-end;
  flex: 1;
  height: 86px;
  padding: 0 0 0 13px;
  box-sizing: border-box;
}
.collapse svg {
  margin-bottom: 3px;
}

/* document */
.workspace {
  position: relative;
  display: flex;
  flex: 1;
  min-height: 0;
}
.canvas {
  flex: 1;
  overflow: hidden;
  background: #e6e6e6;
  padding: 24px 0 0 398px;
}
.page {
  position: relative;
  box-sizing: border-box;
  width: 1107px;
  height: 1200px;
  padding: 100px 133px 0 134px;
  background: #fff;
  border: 1px solid #c6c6c6;
  border-bottom: 0;
  font-weight: 300;
  color: #000;
}
.crops {
  display: flex;
  justify-content: space-between;
  margin-top: -1px;
}
.crop {
  width: 32px;
  height: 32px;
  border-bottom: 1px solid #b0b0b0;
}
.crop-left {
  border-right: 1px solid #b0b0b0;
}
.crop-right {
  border-left: 1px solid #b0b0b0;
}
.doc {
  margin: 0 -10px 0 0;
}
.anchor {
  display: block;
  width: 6px;
  height: 6px;
  margin: 49px 0 0 20px;
  background: #000;
}
.doc-title {
  margin: -1px 0 0;
  padding-left: 342px;
  font-size: 25.700px;
  font-weight: 300;
  line-height: 40px;
  color: #2f5496;
  white-space: nowrap;
}
.greet,
.hello {
  margin: 0;
  font-size: 20.500px;
  line-height: 40px;
  white-space: nowrap;
  padding-left: 34px;
}
.greet {
  margin-top: 20px;
}
.hello {
  margin-top: 21px;
  padding-left: 74px;
}
.para {
  margin-top: 17px;
  padding-left: 33px;
  font-size: 20.450px;
  line-height: 58.500px;
  white-space: nowrap;
}
.para .first {
  padding-left: 40.800px;
}
.u {
  font-family: "Liberation Sans", sans-serif;
  font-size: 20.800px;
  line-height: 0;
}
.wide {
  margin-left: 9px;
}
.ret {
  font-family: "DejaVu Sans", sans-serif;
  font-size: 18px;
  line-height: 0;
  color: #999;
}
.ret-big {
  font-size: 23px;
}
.callout {
  position: absolute;
  left: 144px;
  top: 355px;
  box-sizing: border-box;
  width: 821px;
  height: 199px;
  border: 11px solid #f00;
  border-radius: 32px;
}
.arrow {
  position: absolute;
  left: 641px;
  top: 566px;
}

/* scrollbar */
.scrollbar {
  display: flex;
  flex-direction: column;
  flex: none;
  box-sizing: border-box;
  width: 16px;
  padding: 2px 1px 2px 0;
  background: #d9d9d9;
}
.thumb {
  box-sizing: border-box;
  height: 445px;
  background: #fff;
  border: 1px solid #666;
}
.sb-up {
  display: block;
  width: 0;
  margin: 4px auto 0;
  border-style: solid;
  border-width: 0 4px 5px;
  border-color: transparent transparent #666;
}
.sb-down {
  box-sizing: border-box;
  height: 15px;
  margin-top: auto;
  background: #fff;
  border: 1px solid #666;
}
.sb-down-tri {
  display: block;
  width: 0;
  margin: 4px auto 0;
  border-style: solid;
  border-width: 5px 4px 0;
  border-color: #666 transparent transparent;
}
.marker {
  position: absolute;
  top: -21px;
  right: 1px;
  box-sizing: border-box;
  width: 9px;
  height: 50px;
  padding-top: 20px;
  background: #fff;
  border: 2px solid #8a8a8a;
  border-radius: 5px;
}
.marker i {
  display: block;
  width: 5px;
  height: 27px;
  background: #f7782a;
}

/* status bar */
.statusbar {
  display: flex;
  align-items: center;
  flex: none;
  box-sizing: border-box;
  height: 23px;
  background: #f1f1f1;
  border-top: 1px solid #c6c6c6;
  border-bottom: 1px solid #d4e3f0;
  color: #444;
}
.st {
  margin-top: -2px;
  font-size: 12px;
  word-spacing: 1.500px;
  white-space: nowrap;
}
.st-page {
  margin-left: 7px;
  width: 90px;
}
.st-words {
  margin-left: 20px;
  width: 50px;
}
.st-chars {
  margin-left: 15px;
  width: 62px;
}
.st-proof {
  margin-left: 18px;
}
.st-lang {
  margin-left: 18px;
  width: 56px;
}
.st-macro {
  margin-left: 19px;
}
.st-right {
  display: flex;
  align-items: center;
  height: 100%;
  margin-left: auto;
  padding-right: 8px;
}
.view-active {
  display: flex;
  align-items: center;
  justify-content: center;
  width: 40px;
  height: 100%;
  margin-left: 13px;
  background: #c6c6c6;
}
.view-active + svg {
  margin-left: 13px;
}
.z-minus {
  margin-left: 19px;
}
.slider {
  position: relative;
  width: 100px;
  height: 1px;
  margin-left: 5px;
  background: #555;
}
.tick {
  position: absolute;
  left: 50px;
  top: -3px;
  width: 1px;
  height: 7px;
  background: #555;
}
.knob {
  position: absolute;
  left: 51px;
  top: -5px;
  width: 5px;
  height: 11px;
  background: #666;
}
.z-plus {
  margin-left: 5px;
}
.st-zoom {
  margin-left: 14px;
}

.watermark {
  position: absolute;
  left: 1470px;
  top: 820px;
  font-family: "Liberation Sans", sans-serif;
  pointer-events: none;
}
</style>
